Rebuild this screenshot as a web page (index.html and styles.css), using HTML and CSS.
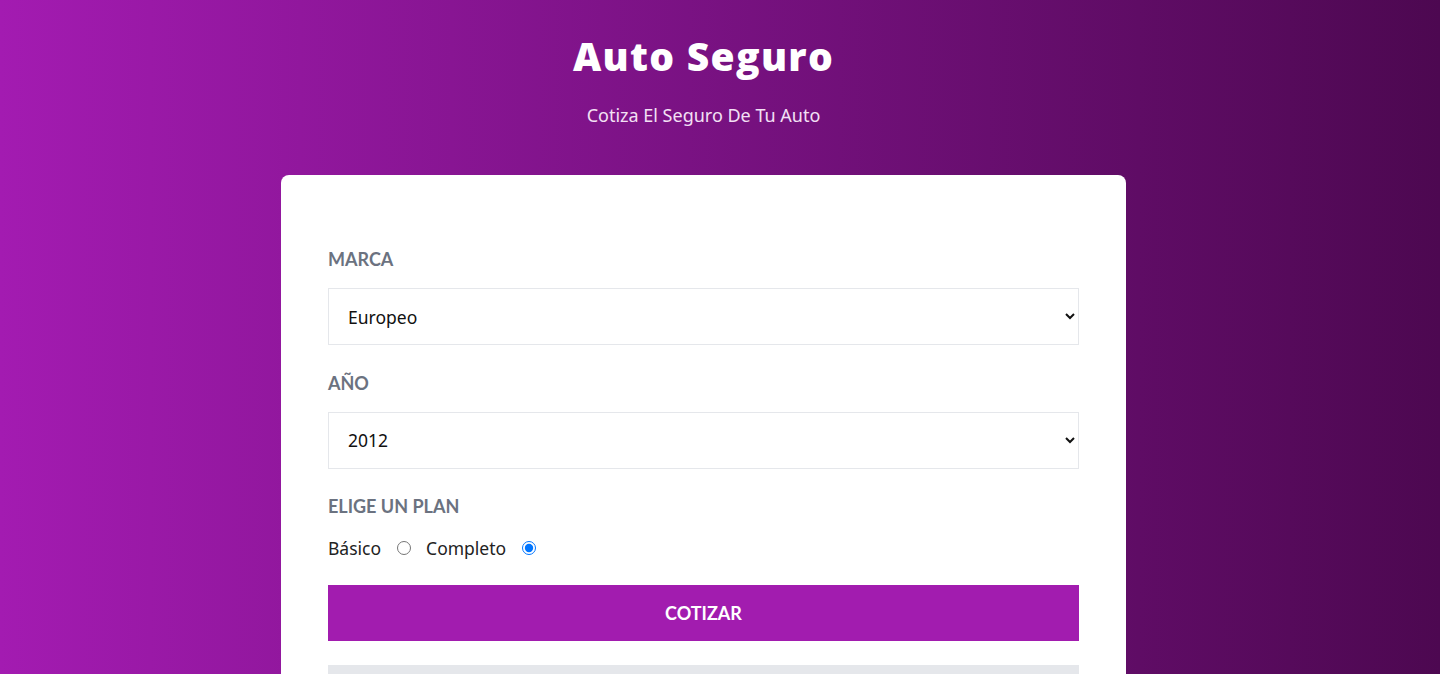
FILE: index.html
```html
<!DOCTYPE html>
<html lang="es">
<head>
<meta charset="utf-8">
<title>Auto Seguro</title>
<link rel="stylesheet" href="styles.css">
</head>
<body>
<div class="page">
  <header class="header">
    <h1 class="title">Auto Seguro</h1>
    <p class="subtitle">Cotiza El Seguro De Tu Auto</p>
  </header>
  <main class="card">
    <form class="form">
      <div class="field">
        <label class="label">Marca</label>
        <select class="select">
          <option>Europeo</option>
        </select>
      </div>
      <div class="field">
        <label class="label">Año</label>
        <select class="select">
          <option>2012</option>
        </select>
      </div>
      <div class="field field-plan">
        <label class="label">Elige un plan</label>
        <div class="radios">
          <label class="radio-label">Básico</label>
          <input type="radio" name="plan" class="radio">
          <label class="radio-label">Completo</label>
          <input type="radio" name="plan" class="radio" checked>
        </div>
      </div>
      <button type="button" class="button">Cotizar</button>
      <div class="result"></div>
    </form>
  </main>
</div>
</body>
</html>
```

FILE: styles.css
```css
html, body {
  margin: 0;
  padding: 0;
}
body {
  min-height: 674px;
  background: linear-gradient(to right, #a31bb1, #4d0851);
  font-family: "Noto Sans", "Open Sans", sans-serif;
  overflow: hidden;
}
.page {
  width: 1407px;
}
.header {
  text-align: center;
  padding-top: 30px;
}
.title {
  margin: 0;
  font-family: "Open Sans", sans-serif;
  font-weight: 800;
  font-size: 39px;
  letter-spacing: 1.3px;
  line-height: 52px;
  color: #fff;
}
.subtitle {
  margin: 21px 0 0;
  font-size: 18px;
  line-height: 24px;
  color: #f3e0f5;
}
.card {
  width: 845px;
  margin: 48px auto 0;
  background: #fff;
  border-radius: 8px 8px 0 0;
  padding: 72px 47px 40px;
  box-sizing: border-box;
}
.form {
  display: flex;
  flex-direction: column;
}
.field {
  display: flex;
  flex-direction: column;
  margin-bottom: 25.5px;
}
.label {
  font-family: "Lato", sans-serif;
  font-weight: 700;
  text-transform: uppercase;
  font-size: 18px;
  line-height: 24px;
  color: #6b7280;
  margin-bottom: 17px;
}
.select {
  height: 57px;
  border: 1px solid #e5e7eb;
  background: #fff;
  padding: 0 12px 0 15px;
  font-family: "Noto Sans", sans-serif;
  font-size: 17.5px;
  color: #111;
  border-radius: 0;
}
.field-plan {
  margin-bottom: 25px;
}
.radios {
  display: flex;
  align-items: center;
  margin-top: 1px;
}
.radio-label {
  font-size: 17.5px;
  line-height: 24px;
  color: #222;
}
.radio {
  margin: 0 15px 0 16px;
  width: 14px;
  height: 14px;
}
.button {
  height: 56px;
  border: none;
  background: #a21caf;
  color: #fff;
  font-family: "Lato", sans-serif;
  font-weight: 700;
  font-size: 18px;
  text-transform: uppercase;
  cursor: pointer;
}
.result {
  margin-top: 24px;
  height: 60px;
  background: #e5e7eb;
}
```
